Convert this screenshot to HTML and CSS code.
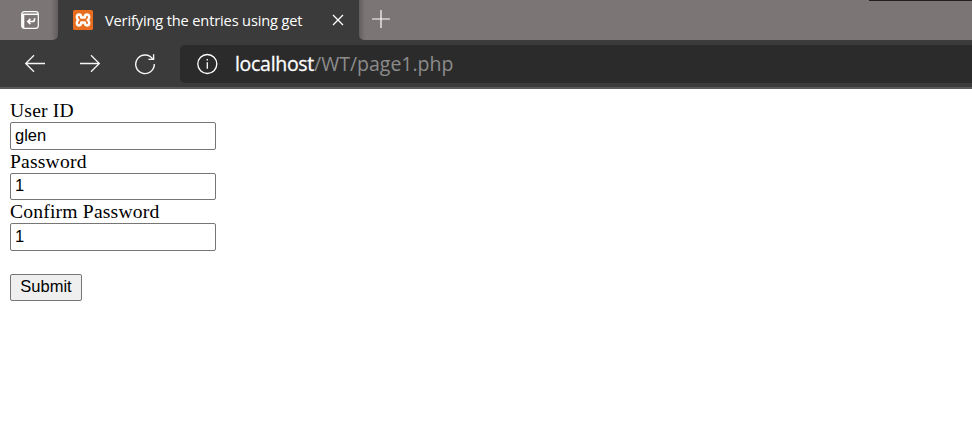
FILE: index.html
```html
<!DOCTYPE html>
<html lang="en">
<head>
<meta charset="utf-8">
<title>Verifying the entries using get</title>
<link rel="stylesheet" href="styles.css">
</head>
<body>
<header class="tabs">
  <div class="tab-actions">
    <svg class="actions-icon" width="18" height="18" viewBox="0 0 18 18" fill="none" stroke="#fff">
      <rect x=".7" y=".7" width="16.6" height="16.6" rx="2.5" stroke-width="1.2"/>
      <path d="M1 3.3h16" stroke-width="1.5"/><path d="M2.2 3v14" stroke-width="2.2"/>
      <path d="M13.5 7.2v1.2q0 2.1-2.1 2.1H7M9.4 7.9 6.8 10.5l2.6 2.6" stroke-width="1.6"/>
    </svg>
  </div>
  <div class="tab">
    <svg class="favicon" width="20" height="20" viewBox="0 0 20 20">
      <rect width="20" height="20" rx="1.5" fill="#e96d1f"/>
      <path d="M8.2 7.4h3.6C11.8 3.6 16.2 3.8 16.2 7c0 1.5-.6 2.4-1.5 3 .9.6 1.5 1.5 1.5 3 0 3.2-4.4 3.4-4.4-.4H8.2c0 3.8-4.4 3.6-4.4.4 0-1.5.6-2.4 1.5-3-.9-.6-1.5-1.5-1.5-3 0-3.2 4.4-3.4 4.4.4Z" fill="none" stroke="#fff" stroke-width="2.5" stroke-linejoin="round"/>
    </svg>
    <span class="tab-title">Verifying the entries using get</span>
    <svg class="close" width="12" height="12" viewBox="0 0 12 12" stroke="#fff" stroke-width="1.3"><path d="m1 1 10 10M11 1 1 11"/></svg>
  </div>
  <div class="new-tab">
    <svg width="18" height="18" viewBox="0 0 18 18" stroke="#fff" stroke-width="1.2"><path d="M9 0v18M0 9h18"/></svg>
  </div>
  <div class="window-edge"></div>
</header>
<nav class="toolbar">
  <svg class="back" width="22" height="20" viewBox="0 0 22 20" fill="none" stroke="#f5f5f5" stroke-width="1.3"><path d="M21 9.5H1.8M10 1.2 1.7 9.5l8.3 8.3"/></svg>
  <svg class="forward" width="22" height="20" viewBox="0 0 22 20" fill="none" stroke="#f5f5f5" stroke-width="1.3"><path d="M1 9.5h19.2M12 1.2l8.3 8.3-8.3 8.3"/></svg>
  <svg class="reload" width="22" height="22" viewBox="0 0 22 22" fill="none" stroke="#f5f5f5" stroke-width="1.4"><path d="M18.8 6.2A9.3 9.3 0 1 0 20.3 11M19.6 1.2v5.2h-5.2"/></svg>
  <div class="address">
    <svg class="info" width="22" height="22" viewBox="0 0 22 22" fill="none" stroke="#fff" stroke-width="1.3"><circle cx="11.3" cy="11" r="9.5"/><path d="M11.3 9.2v6.6M11.3 6v1.6"/></svg>
    <span class="url"><span class="host">localhost</span><span class="path">/WT/page1.php</span></span>
  </div>
</nav>
<main>
  <form>
    <label for="user">User ID</label>
    <input id="user" type="text" value="glen">
    <label for="password">Password</label>
    <input id="password" class="middle" type="text" value="1">
    <label for="confirm">Confirm Password</label>
    <input id="confirm" type="text" value="1">
    <button type="button">Submit</button>
  </form>
</main>
</body>
</html>
```
FILE: styles.css
```css
* { box-sizing: border-box; }
body { margin: 0; height: 422px; overflow: hidden; background: #fff; color: #000; }
svg { display: block; flex: none; }
.tabs { display: flex; height: 40px; background: #3b3b3b; }
.tab-actions { width: 58px; padding: 11px 0 0 21px; background: linear-gradient(to right, #7c7575 51px, #625d5d); border-bottom-right-radius: 5px; }
.tab { display: flex; align-items: center; width: 301px; height: 40px; padding-left: 15px; background: #3b3b3b; border-radius: 5px 5px 0 0; }
.tab-title { width: 220px; margin-left: 12px; font: 14.6px "Open Sans", sans-serif; letter-spacing: -0.14px; color: #fff; white-space: nowrap; }
.close { margin-left: 7px; }
.new-tab { width: 31px; padding: 10px 0 0 13px; background: linear-gradient(to right, #625d5d, #7c7575 6px); border-bottom-left-radius: 5px; }
.window-edge { flex: 1; background: linear-gradient(#231f1f, #231f1f) 479px 0 / 200px 1px no-repeat, #7c7575; }
.toolbar { display: flex; align-items: center; height: 49px; padding-left: 24px; background: #3b3b3b; border-bottom: 2px solid #5a5a5a; }
.forward, .reload { margin-left: 33px; }
.address { display: flex; align-items: center; align-self: flex-start; flex: 1; height: 38px; margin: 5px 0 0 24px; padding-left: 16px; background: #2b2b2b; border-radius: 5px 0 0 5px; }
.url { margin-left: 17px; font: 19.5px/30px "Open Sans", sans-serif; white-space: nowrap; }
.host { color: #fff; letter-spacing: -0.3px; -webkit-text-stroke: 0.3px #fff; }
.path { color: #8c8c8c; }
main { padding: 11px 10px 0; }
form { display: flex; flex-direction: column; align-items: flex-start; }
label { height: 22px; font: 19.6px/22px "Liberation Serif", serif; letter-spacing: 0.19px; white-space: nowrap; }
input + label { height: 23px; line-height: 23px; }
input, button { font: 16.5px "Liberation Sans", sans-serif; color: #000; border: 1px solid #767676; border-radius: 2px; }
input { width: 206px; height: 28px; padding: 0 4px 2px; background: #fff; }
.middle { height: 27px; }
button { width: 72px; height: 27px; margin-top: 23px; padding: 0 0 2px; background: #efefef; }
```
